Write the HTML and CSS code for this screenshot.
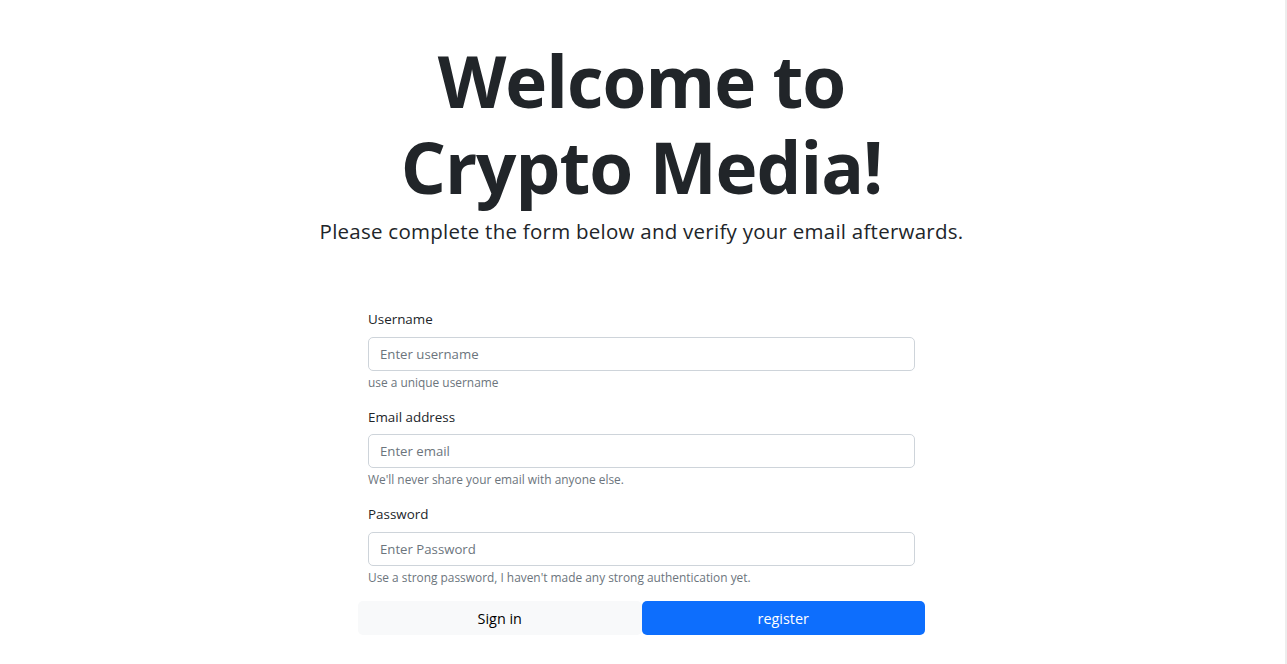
FILE: index.html
```html
<!DOCTYPE html>
<html lang="en">
<head>
<meta charset="utf-8">
<title>Crypto Media - Register</title>
<link rel="stylesheet" href="styles.css">
</head>
<body>
<div class="page">
  <header class="hero">
    <h1 class="title">Welcome to Crypto Media!</h1>
    <p class="lead">Please complete the form below and verify your email afterwards.</p>
  </header>
  <form class="form">
    <div class="fields">
      <div class="group">
        <label class="label" for="username">Username</label>
        <input class="control" id="username" type="text" placeholder="Enter username">
        <div class="help">use a unique username</div>
      </div>
      <div class="group">
        <label class="label" for="email">Email address</label>
        <input class="control" id="email" type="email" placeholder="Enter email">
        <div class="help">We'll never share your email with anyone else.</div>
      </div>
      <div class="group">
        <label class="label" for="password">Password</label>
        <input class="control" id="password" type="password" placeholder="Enter Password">
        <div class="help">Use a strong password, I haven't made any strong authentication yet.</div>
      </div>
    </div>
    <div class="actions">
      <button class="btn btn-light" type="button">Sign in</button>
      <button class="btn btn-primary" type="submit">register</button>
    </div>
  </form>
</div>
</body>
</html>
```
FILE: styles.css
```css
html, body {
  margin: 0;
  padding: 0;
  background: #fff;
}
body {
  font-family: "Open Sans", "Noto Sans", sans-serif;
  color: #212529;
}
.page {
  min-height: 100vh;
  box-sizing: border-box;
  border-right: 2px solid #ededed;
  padding: 38px 2px 0 0;
}
.hero {
  text-align: center;
}
.title {
  margin: 0 auto;
  max-width: 600px;
  font-size: 71px;
  line-height: 86.4px;
  letter-spacing: -1px;
  font-weight: 700;
  color: #212529;
}
.lead {
  margin: 7.7px 0 0;
  font-size: 20.5px;
  line-height: 25px;
  letter-spacing: 0.25px;
  font-weight: 500;
  color: #212529;
}
.form {
  width: 567px;
  margin: 65.7px auto 0;
}
.fields {
  padding: 0 10px;
}
.group {
  margin-bottom: 15.2px;
}
.group:last-child {
  margin-bottom: 14.8px;
}
.label {
  display: block;
  font-size: 13.4px;
  line-height: 21.6px;
  margin-bottom: 6.2px;
  color: #212529;
}
.control {
  display: block;
  box-sizing: border-box;
  width: 100%;
  height: 34px;
  margin: 0;
  padding: 0 11px;
  border: 1px solid #ced4da;
  border-radius: 5px;
  font-family: inherit;
  font-size: 13.2px;
  color: #212529;
  background: #fff;
}
.control::placeholder {
  color: #6c757d;
}
.help {
  margin-top: 1.6px;
  font-size: 11.9px;
  line-height: 18.9px;
  color: #6c757d;
}
.actions {
  display: flex;
}
.btn {
  flex: 1 1 0;
  height: 34px;
  border: 0;
  border-radius: 5px;
  font-family: inherit;
  font-size: 14.4px;
  padding: 0 11px;
  cursor: pointer;
}
.btn-light {
  background: #f8f9fa;
  color: #000;
}
.btn-primary {
  background: #0d6efd;
  color: #fff;
}
```
